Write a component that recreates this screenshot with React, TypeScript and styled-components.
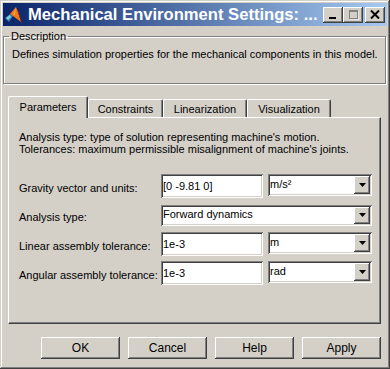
import { Fragment } from "react";
import styled, { createGlobalStyle } from "styled-components";

const GlobalStyle = createGlobalStyle`
  html, body {
    margin: 0;
    padding: 0;
    background: #ffffff;
  }
  body {
    font-family: "Liberation Sans", Arial, sans-serif;
    font-size: 11px;
    color: #000;
  }
  * {
    box-sizing: border-box;
  }
`;

const face = "#d4d0c8";
const shadow = "#808080";
const darkShadow = "#404040";

const raised = `
  box-shadow: inset -1px -1px ${darkShadow}, inset 1px 1px #ffffff,
    inset -2px -2px ${shadow}, inset 2px 2px ${face};
`;
const sunken = `
  box-shadow: inset 1px 1px ${shadow}, inset -1px -1px #ffffff,
    inset 2px 2px ${darkShadow}, inset -2px -2px ${face};
`;

const Window = styled.div`
  width: 390px;
  height: 369px;
  background: ${face};
  padding: 3px;
  display: flex;
  flex-direction: column;
  box-shadow: inset -1px -1px ${darkShadow}, inset 1px 1px ${face},
    inset -2px -2px ${shadow}, inset 2px 2px #ffffff;
`;

const TitleBar = styled.div`
  height: 23px;
  display: flex;
  align-items: center;
  padding: 0 2px 0 2px;
  background: linear-gradient(to right, #0a246a, #a6caf0);
`;

const TitleText = styled.span`
  margin-left: 5px;
  color: #ffffff;
  font-weight: bold;
  font-size: 16.6px;
  white-space: nowrap;
`;

const CaptionButtons = styled.div`
  margin-left: auto;
  display: flex;
`;

const CaptionButton = styled.div<{ $gap?: boolean }>`
  width: 20px;
  height: 16px;
  margin-left: ${(p) => (p.$gap ? "2px" : "0")};
  background: ${face};
  display: flex;
  align-items: center;
  justify-content: center;
  ${raised}
`;

const GroupBox = styled.fieldset`
  margin: 4px 1px 0 0;
  height: 54px;
  padding: 5px 5px 0 5px;
  border: 1px solid ${shadow};
  box-shadow: inset 1px 1px #ffffff, 1px 1px #ffffff;
`;

const Legend = styled.legend`
  padding: 0 2px;
  line-height: 13px;
`;

const Description = styled.div`
  padding-left: 3px;
  line-height: 13px;
`;

const TabStrip = styled.div`
  margin: 12px 0 0 5px;
  height: 22px;
  display: flex;
  align-items: flex-end;
  position: relative;
  z-index: 1;
`;

const Tab = styled.div<{ $active?: boolean; $width: number }>`
  width: ${(p) => p.$width}px;
  height: ${(p) => (p.$active ? 22 : 18)}px;
  margin-bottom: ${(p) => (p.$active ? 0 : 1)}px;
  background: ${face};
  display: flex;
  align-items: ${(p) => (p.$active ? "flex-start" : "center")};
  padding-top: ${(p) => (p.$active ? "4px" : "0")};
  justify-content: center;
  border-top: 1px solid #ffffff;
  border-left: 1px solid #ffffff;
  border-right: 1px solid ${darkShadow};
  border-top-left-radius: 2px;
  border-top-right-radius: 2px;
  box-shadow: inset -1px 0 ${shadow};
  font-size: 11px;
`;

const Panel = styled.div`
  margin: -1px 6px 0 5px;
  height: 207px;
  padding: 13px 7px 0 10px;
  border-top: 1px solid #ffffff;
  border-left: 1px solid #ffffff;
  border-right: 1px solid ${darkShadow};
  border-bottom: 1px solid ${darkShadow};
  box-shadow: inset -1px -1px ${shadow};
`;

const Intro = styled.div`
  line-height: 12px;
`;

const Form = styled.div`
  margin-top: 19px;
  display: grid;
  grid-template-columns: 138px 102px 104px;
  column-gap: 5px;
  row-gap: 5px;
  grid-auto-rows: 24px;
  margin-left: -1px;
`;

const Label = styled.div`
  align-self: center;
  font-size: 11px;
  white-space: nowrap;
  margin-left: 1px;
  padding-top: 3px;
`;

const TextField = styled.div`
  height: 24px;
  background: #ffffff;
  padding: 0 2px;
  display: flex;
  align-items: center;
  font-size: 11px;
  ${sunken}
`;

const Combo = styled.div<{ $wide?: boolean }>`
  grid-column: ${(p) => (p.$wide ? "2 / span 2" : "auto")};
  height: ${(p) => (p.$wide ? 21 : 22)}px;
  align-self: ${(p) => (p.$wide ? "center" : "start")};
  background: #ffffff;
  padding: 2px;
  display: flex;
  font-size: 11px;
  ${sunken}
`;

const ComboText = styled.div`
  flex: 1;
  display: flex;
  align-items: center;
  margin-top: -2px;
`;

const ComboButton = styled.div`
  width: 16px;
  background: ${face};
  display: flex;
  align-items: center;
  justify-content: center;
  ${raised}
`;

const ButtonRow = styled.div`
  margin: 13px 6px 0 0;
  display: flex;
  justify-content: flex-end;
  gap: 8px;
`;

const PushButton = styled.div`
  width: 79px;
  height: 22px;
  background: ${face};
  display: flex;
  align-items: center;
  justify-content: center;
  font-size: 12px;
  ${raised}
`;

function Arrow() {
  return (
    <svg width="7" height="4" viewBox="0 0 7 4">
      <polygon points="0,0 7,0 3.5,4" fill="#000" />
    </svg>
  );
}

function MatlabIcon() {
  return (
    <svg width="18" height="18" viewBox="0 0 18 18">
      <polygon points="0,12 5,8 8,10 4,16" fill="#2f7fa8" />
      <polygon points="1,12 5,9 6,11 3,14" fill="#7fd0e0" />
      <polygon points="5,8 11,1 13,6 16,16 8,10" fill="#f07a18" />
      <polygon points="11,1 13,6 16,16 17,17 14,7" fill="#b0200c" />
      <polygon points="8,10 11,1 10,8" fill="#f8b040" />
    </svg>
  );
}

export default function App() {
  const rows = [
    { label: "Gravity vector and units:", value: "[0 -9.81 0]", unit: "m/s²" },
    { label: "Analysis type:", value: "Forward dynamics" },
    { label: "Linear assembly tolerance:", value: "1e-3", unit: "m" },
    { label: "Angular assembly tolerance:", value: "1e-3", unit: "rad" },
  ];
  const tabs = [
    { name: "Parameters", width: 80 },
    { name: "Constraints", width: 75 },
    { name: "Linearization", width: 84 },
    { name: "Visualization", width: 84 },
  ];

  return (
    <>
      <GlobalStyle />
      <Window>
        <TitleBar>
          <MatlabIcon />
          <TitleText>Mechanical Environment Settings: ...</TitleText>
          <CaptionButtons>
            <CaptionButton>
              <svg width="10" height="10" viewBox="0 0 10 10">
                <rect x="1" y="7" width="7" height="2" fill="#000" />
              </svg>
            </CaptionButton>
            <CaptionButton>
              <svg width="11" height="10" viewBox="0 0 11 10">
                <rect x="1.5" y="0.5" width="8" height="8" fill="none" stroke="#808080" />
                <rect x="1" y="1" width="9" height="1" fill="#808080" />
                <path d="M2 10 H11 V1" stroke="#fff" fill="none" />
              </svg>
            </CaptionButton>
            <CaptionButton $gap>
              <svg width="10" height="9" viewBox="0 0 10 9">
                <path d="M1 0.5 L9 8.5 M9 0.5 L1 8.5" stroke="#000" strokeWidth="2" />
              </svg>
            </CaptionButton>
          </CaptionButtons>
        </TitleBar>

        <GroupBox>
          <Legend>Description</Legend>
          <Description>
            Defines simulation properties for the mechanical components in this model.
          </Description>
        </GroupBox>

        <TabStrip>
          {tabs.map((t, i) => (
            <Tab key={t.name} $active={i === 0} $width={t.width}>
              {t.name}
            </Tab>
          ))}
        </TabStrip>

        <Panel>
          <Intro>
            Analysis type: type of solution representing machine's motion.
            <br />
            Tolerances: maximum permissible misalignment of machine's joints.
          </Intro>
          <Form>
            {rows.map((r) => (
              <Fragment key={r.label}>
                <Label>{r.label}</Label>
                {r.unit ? (
                  <>
                    <TextField>{r.value}</TextField>
                    <Combo>
                      <ComboText>{r.unit}</ComboText>
                      <ComboButton>
                        <Arrow />
                      </ComboButton>
                    </Combo>
                  </>
                ) : (
                  <Combo $wide>
                    <ComboText>{r.value}</ComboText>
                    <ComboButton>
                      <Arrow />
                    </ComboButton>
                  </Combo>
                )}
              </Fragment>
            ))}
          </Form>
        </Panel>

        <ButtonRow>
          <PushButton>OK</PushButton>
          <PushButton>Cancel</PushButton>
          <PushButton>Help</PushButton>
          <PushButton>Apply</PushButton>
        </ButtonRow>
      </Window>
    </>
  );
}
